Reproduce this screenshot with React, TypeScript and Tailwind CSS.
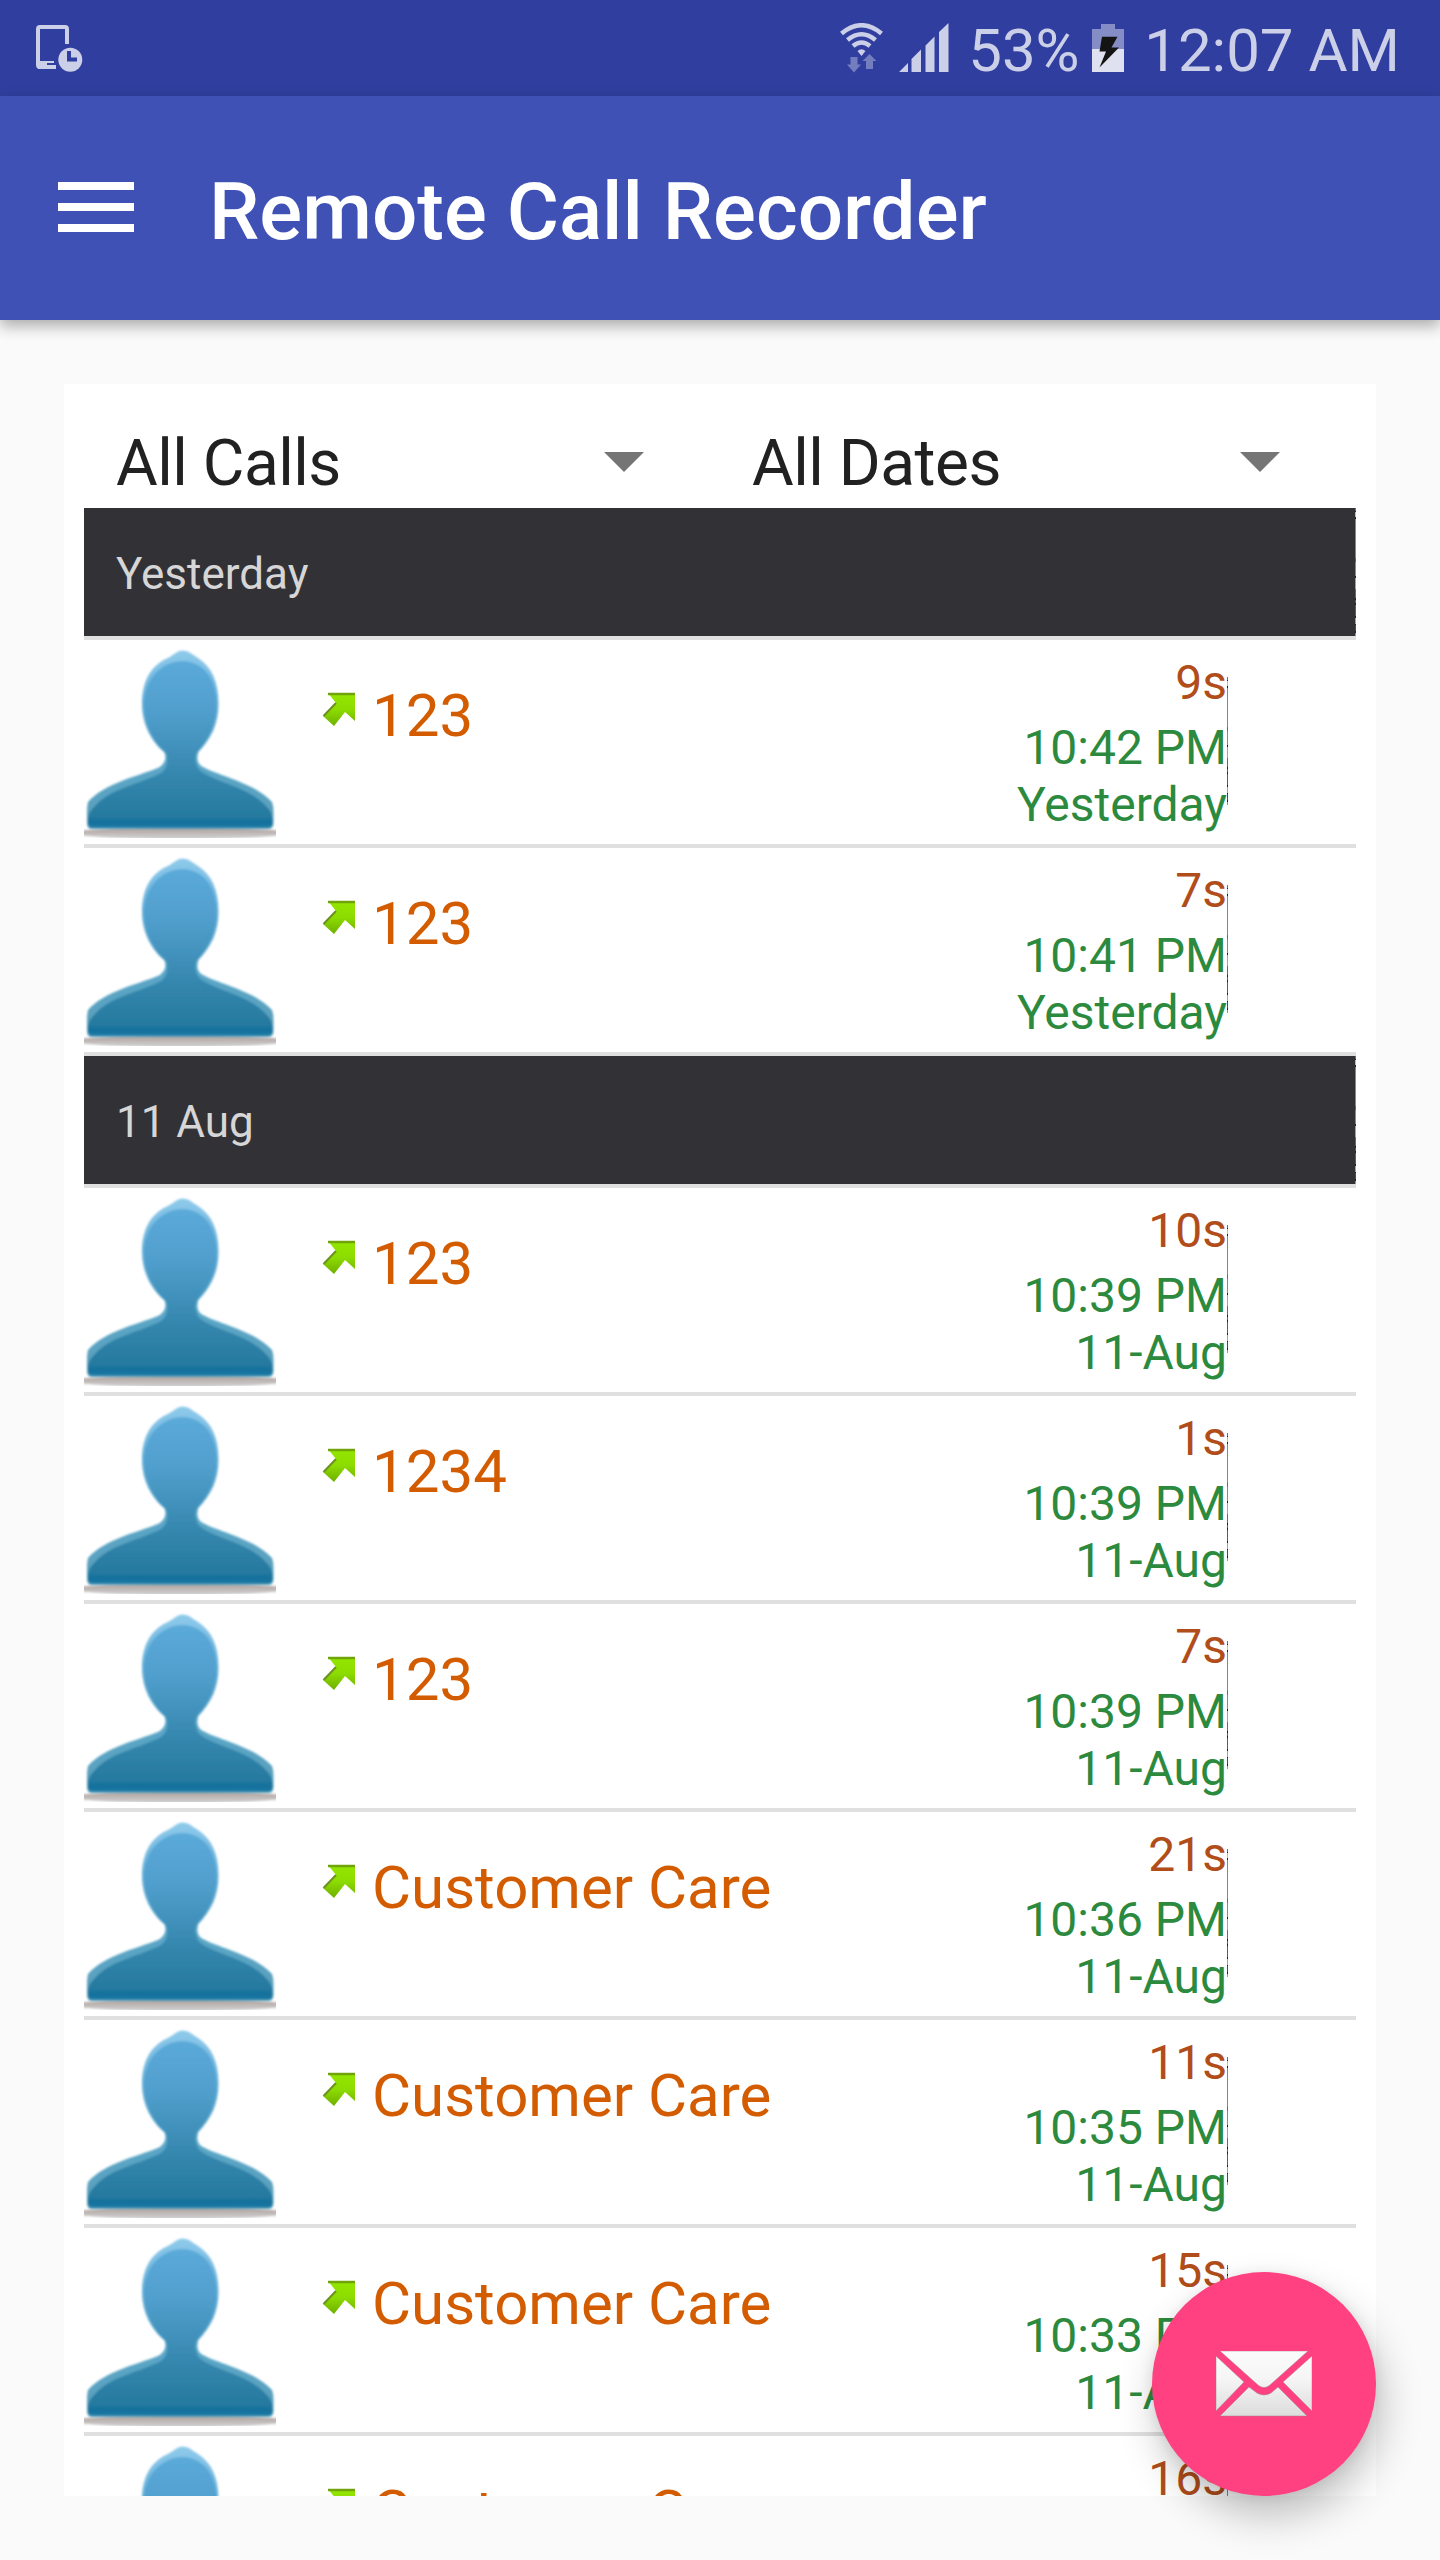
type Call = {
  name: string;
  duration: string;
  time: string;
  date: string;
};

const sections: { title: string; calls: Call[] }[] = [
  {
    title: 'Yesterday',
    calls: [
      { name: '123', duration: '9s', time: '10:42 PM', date: 'Yesterday' },
      { name: '123', duration: '7s', time: '10:41 PM', date: 'Yesterday' },
    ],
  },
  {
    title: '11 Aug',
    calls: [
      { name: '123', duration: '10s', time: '10:39 PM', date: '11-Aug' },
      { name: '1234', duration: '1s', time: '10:39 PM', date: '11-Aug' },
      { name: '123', duration: '7s', time: '10:39 PM', date: '11-Aug' },
      { name: 'Customer Care', duration: '21s', time: '10:36 PM', date: '11-Aug' },
      { name: 'Customer Care', duration: '11s', time: '10:35 PM', date: '11-Aug' },
      { name: 'Customer Care', duration: '15s', time: '10:33 PM', date: '11-Aug' },
      { name: 'Customer Care', duration: '16s', time: '10:33 PM', date: '11-Aug' },
    ],
  },
];

// thin multicoloured strip shown at the end of headers and rows
const Strip = () => (
  <svg width="1" height="128" viewBox="0 0 1 128" shapeRendering="crispEdges" className="shrink-0">
    <rect width="1" height="128" fill="#222026" />
    <rect width="1" height="3" fill="#7a5cb0" />
    <rect y="4" width="1" height="5" fill="#d8cc30" />
    <rect y="11" width="1" height="39" fill="#a06cc8" />
    <rect y="50" width="1" height="4" fill="#6a5aa0" />
    <rect y="54" width="1" height="14" fill="#86a028" />
    <rect y="70" width="1" height="11" fill="#b48cf0" />
    <rect y="81" width="1" height="9" fill="#4a8424" />
    <rect y="92" width="1" height="3" fill="#5c50a0" />
    <rect y="97" width="1" height="11" fill="#2c8420" />
    <rect y="110" width="1" height="6" fill="#b48cf0" />
    <rect y="117" width="1" height="6" fill="#206c20" />
    <rect y="125" width="1" height="3" fill="#a080e0" />
  </svg>
);

const Avatar = () => (
  <svg width="192" height="192" viewBox="0 0 192 192" className="shrink-0">
    <ellipse cx="96" cy="187" rx="108" ry="6" fill="url(#avatarShadow)" filter="url(#soft)" />
    <g filter="url(#soft)">
      <path
        d="M99 4.500C106 5 110 10 114 12C128 21 134.500 36 134.500 58C134.500 78 127 93 114.500 106C112.500 111 113 118 119 121C135 130 171 137 188 156Q189.500 160 189.500 166V177Q189.500 183 184 183H8Q3 183 3 177V166Q3 160 4 156C21 137 52 131 75 121.500C81 118 83 111 80 106C68 96 58 79 58 58C58 36 66 20 84 12C90 9 93 4.500 99 4.500Z"
        fill="url(#avatarEdge)"
      />
      <path
        d="M99 15C118 16 132 30 132.500 58C132.500 78 125 92 113 106C110 112 111 121 118 126C135 137 166 142 182 160Q188.500 166 188.500 174V177Q188.500 182 183 182H9Q4 182 4 177V174Q4 166 11 160C27 142 56 138 77 127C84 122 84 113 82 107C70 96 60 79 60 58C61 30 80 15 99 15Z"
        fill="url(#avatarFill)"
      />
    </g>
  </svg>
);

const OutgoingArrow = () => (
  <svg width="34" height="36" viewBox="0 0 34 36" className="shrink-0">
    <path d="M6 1H33V29L23 20L12 34L1 24L14 11Z" fill="url(#arrowFill)" />
    <path d="M6 2H33" stroke="#70a40c" strokeWidth="2.5" />
    <path d="M1.500 24L14 11" stroke="#6c9020" strokeWidth="2" />
  </svg>
);

const StatusBar = () => (
  <div className="flex h-24 items-center bg-[#303f9f] pl-9 pr-10 text-[60px] leading-none text-[#cbcfe8]">
    <svg width="48" height="48" viewBox="36 24 48 48">
      <path
        d="M67 44V29Q67 27 65 27H40Q38 27 38 29V65Q38 67 40 67H56"
        fill="none"
        stroke="#cbcfe8"
        strokeWidth="4"
      />
      <path d="M38 61H54V63H47V67H56V69H38Z" fill="#cbcfe8" />
      <circle cx="70.300" cy="59.700" r="12" fill="#cbcfe8" />
      <path d="M69 51V59.500H77" fill="none" stroke="#303f9f" strokeWidth="4" />
    </svg>
    <svg width="110" height="50" viewBox="840 23 110 50" className="ml-auto">
      <g fill="none" stroke="#cbcfe8" strokeWidth="4.500">
        <path d="M841.500 33.500Q861.500 17 881.500 33.500" />
        <path d="M847.500 40Q861.500 28.500 875.500 40" />
        <path d="M853 46Q861.500 39 870 46" />
      </g>
      <path d="M857.500 51Q861.500 47.500 865.500 51L861.500 56Z" fill="#cbcfe8" />
      <path
        d="M850.500 57H857.500V64.500H861L854 72.500L847 64.500H850.500ZM869.500 54L876.500 61H873V69H866V61H862.500Z"
        fill="#747ebf"
      />
      <path
        d="M899 72L908 63V72ZM911.500 72V59L921 49.500V72ZM925.500 72V45.500L934.500 36.500V72ZM939 72V32L948.500 23V72Z"
        fill="#cbcfe8"
      />
    </svg>
    <span className="ml-[18px] w-[124px] whitespace-nowrap pt-[5px]">53%</span>
    <svg width="32" height="48" viewBox="0 0 32 48">
      <path d="M9 0H23V5H32V25H0V5H9Z" fill="#858dc6" />
      <path d="M0 25H32V48H0Z" fill="#dfe1f1" />
      <path d="M10 12.700H25.500L19.500 23.500H27L7.500 43.500L14 27.500H7.500Z" fill="#141414" />
    </svg>
    <span className="ml-5 whitespace-nowrap pt-[5px]">12:07 AM</span>
  </div>
);

const Toolbar = () => (
  <div className="relative z-10 flex h-56 items-center bg-[#3f51b5] pl-[58px] shadow-[0_6px_14px_rgba(0,0,0,0.32)]">
    <div className="mb-0.5 flex w-[76px] flex-col gap-[13px]">
      <div className="h-2 bg-white" />
      <div className="h-2 bg-white" />
      <div className="h-2 bg-white" />
    </div>
    <h1 className="ml-[75px] pt-2 text-[80px] font-medium leading-none text-white">
      Remote Call Recorder
    </h1>
  </div>
);

const Spinner = ({ label }: { label: string }) => (
  <div className="flex w-[636px] items-center justify-between pl-8 pr-[76px] text-[64px] leading-[76px] tracking-[-0.5px] text-[#212121]">
    <span className="pt-1">{label}</span>
    <svg width="40" height="20" viewBox="0 0 40 20">
      <path d="M0 0H40L20 20Z" fill="#757575" />
    </svg>
  </div>
);

const CallRow = ({ call }: { call: Call }) => (
  <div className="flex h-[208px] border-b-4 border-[#e0e0e0]">
    <div className="pt-1.5">
      <Avatar />
    </div>
    <div className="ml-[46px] pt-[52px]">
      <OutgoingArrow />
    </div>
    <div className="ml-4 pt-[41px] text-[60px] leading-[70px] text-[#d35b00]">{call.name}</div>
    <div className="ml-auto pt-3.5 text-right text-[48px] leading-[57px]">
      <div className="mb-2 text-[#b04d1a]">{call.duration}</div>
      <div className="text-[#2b8a3e]">{call.time}</div>
      <div className="text-[#2b8a3e]">{call.date}</div>
    </div>
    <div className="mr-32 pt-[37px]">
      <Strip />
    </div>
  </div>
);

const MailButton = () => (
  <button className="absolute bottom-16 right-16 flex size-56 items-center justify-center rounded-full bg-[#ff4081] shadow-[6px_20px_40px_rgba(0,0,0,0.24),0_2px_14px_rgba(0,0,0,0.08)]">
    <svg width="96" height="66" viewBox="0 0 96 66">
      <g fill="url(#mailFill)" stroke="#a08088" strokeOpacity="0.5" strokeWidth="1">
        <path d="M4 0H92L54 34Q48 39 42 34Z" />
        <path d="M0 5L28 31L0 60Z" />
        <path d="M96 5L67 31L96 60Z" />
        <path d="M4 65L33 36L41 42Q48 46 55 42L62 36L91 65Z" />
      </g>
    </svg>
  </button>
);

// gradients shared by every row icon
const Gradients = () => (
  <svg width="0" height="0" className="absolute">
    <defs>
      <filter id="soft" x="-5%" y="-5%" width="110%" height="110%">
        <feGaussianBlur stdDeviation="1.2" />
      </filter>
      <linearGradient id="avatarFill" gradientUnits="userSpaceOnUse" x1="0" y1="14" x2="0" y2="182">
        <stop offset="0" stopColor="#5baada" />
        <stop offset="0.3" stopColor="#519fcd" />
        <stop offset="0.7" stopColor="#3486ad" />
        <stop offset="0.93" stopColor="#267a9f" />
        <stop offset="0.97" stopColor="#0f6f9c" />
        <stop offset="1" stopColor="#2a82a8" />
      </linearGradient>
      <linearGradient id="avatarEdge" gradientUnits="userSpaceOnUse" x1="0" y1="3" x2="0" y2="182">
        <stop offset="0" stopColor="#90cbeb" />
        <stop offset="0.3" stopColor="#66b0da" />
        <stop offset="0.7" stopColor="#5aa5c5" />
        <stop offset="1" stopColor="#5a9fbb" />
      </linearGradient>
      <linearGradient id="avatarShadow" x1="0" y1="0" x2="0" y2="1">
        <stop offset="0.3" stopColor="#b8aca8" />
        <stop offset="0.8" stopColor="#cacaca" />
      </linearGradient>
      <linearGradient id="arrowFill" x1="0" y1="0" x2="0" y2="1">
        <stop offset="0" stopColor="#96e600" />
        <stop offset="0.5" stopColor="#8cdc00" />
        <stop offset="1" stopColor="#6fb000" />
      </linearGradient>
      <linearGradient id="mailFill" gradientUnits="userSpaceOnUse" x1="0" y1="0" x2="0" y2="66">
        <stop offset="0" stopColor="#fbfbfb" />
        <stop offset="0.4" stopColor="#f6f6f6" />
        <stop offset="1" stopColor="#dcdcdc" />
      </linearGradient>
    </defs>
  </svg>
);

export default function App() {
  return (
    <div className="relative flex h-[2560px] w-[1440px] flex-col overflow-hidden bg-[#fafafa] font-[Roboto,sans-serif]">
      <Gradients />
      <StatusBar />
      <Toolbar />
      <main className="mx-16 mt-16 h-[2112px] overflow-hidden bg-white px-5">
        <div className="flex h-[124px] pt-8">
          <Spinner label="All Calls" />
          <Spinner label="All Dates" />
        </div>
        {sections.map((section) => (
          <section key={section.title}>
            <div className="flex h-[132px] items-center justify-between border-b-4 border-[#e0e0e0] bg-[#323136] pl-8 text-[44px] text-[#d6d6d6]">
              <span className="pt-1">{section.title}</span>
              <Strip />
            </div>
            {section.calls.map((call, i) => (
              <CallRow key={i} call={call} />
            ))}
          </section>
        ))}
      </main>
      <MailButton />
    </div>
  );
}
